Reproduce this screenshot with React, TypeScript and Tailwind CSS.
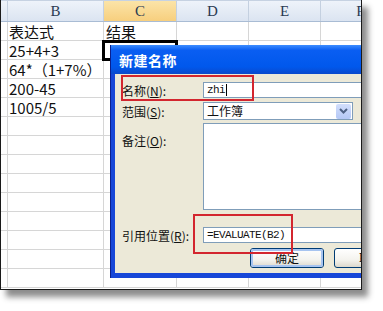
import type { ReactNode } from "react";

const cols = [
  { key: "A", w: "w-[7px]" },
  { key: "B", w: "w-[96px]" },
  { key: "C", w: "w-[73px]" },
  { key: "D", w: "w-[72px]" },
  { key: "E", w: "w-[72px]" },
  { key: "F", w: "w-[80px]" },
];

const data: Record<number, { b?: string; c?: string }> = {
  0: { b: "表达式", c: "结果" },
  1: { b: "25+4+3" },
  2: { b: "64*（1+7%）" },
  3: { b: "200-45" },
  4: { b: "1005/5" },
};

const cjk = { fontFamily: '"Noto Sans CJK SC", "Noto Sans", sans-serif' };
const mono = { fontFamily: '"Liberation Mono", "DejaVu Sans Mono", monospace' };

function Label({ children, k }: { children: ReactNode; k: string }) {
  return (
    <span className="text-[12px] leading-none text-[#111]" style={cjk}>
      {children}(<span className="underline underline-offset-1">{k}</span>):
    </span>
  );
}

function XpButton({ children, primary }: { children: ReactNode; primary?: boolean }) {
  return (
    <div className="flex h-[20px] w-[74px] shrink-0 items-center justify-center rounded-[3px] border border-[#003c74] bg-[linear-gradient(to_bottom,#ffffff,#f4f3ee_60%,#dcd8cc)]">
      <div
        className={
          "flex h-full w-full items-center justify-center rounded-[2px] text-[12px] leading-none text-[#111] " +
          (primary ? "border-2 border-[#a7c4f0]" : "")
        }
        style={cjk}
      >
        {children}
      </div>
    </div>
  );
}

export default function App() {
  return (
    <div className="h-[311px] w-[383px] overflow-hidden bg-white">
      <div className="relative h-[290px] w-[362px] overflow-hidden border-x border-b border-[#1a1a1a] bg-white shadow-[6px_7px_6px_rgba(0,0,0,0.45)]">
        {/* column header */}
        <div className="flex h-[22px] border-b border-[#a9bcd4] border-t border-t-[#c6d2e2]">
          {cols.map((c) => (
            <div
              key={c.key}
              className={
                c.w +
                " flex shrink-0 items-center justify-center border-r border-[#c4d0e0] text-[15px] text-[#2a3a52] " +
                (c.key === "C"
                  ? "bg-[linear-gradient(to_bottom,#fbe4a8,#f7cf7e)]"
                  : "bg-[linear-gradient(to_bottom,#eef3fa,#dbe4f1)]")
              }
              style={{ fontFamily: '"Liberation Serif", "DejaVu Serif", serif' }}
            >
              {c.key === "A" ? "" : c.key}
            </div>
          ))}
        </div>
        {/* rows */}
        {Array.from({ length: 14 }).map((_, r) => (
          <div key={r} className="flex h-[19px] border-b border-[#d6d6d6]">
            {cols.map((c) => (
              <div
                key={c.key}
                className={c.w + " flex shrink-0 items-center overflow-hidden whitespace-nowrap border-r border-[#d6d6d6] text-[15px] leading-none text-[#111]"}
                style={cjk}
              >
                {c.key === "B" && data[r]?.b ? <span className="pl-[1px]">{data[r].b}</span> : null}
                {c.key === "C" && data[r]?.c ? <span className="pl-[2px]">{data[r].c}</span> : null}
              </div>
            ))}
          </div>
        ))}

        {/* active cell C2 */}
        <div className="absolute left-[101px] top-[40px] h-[21px] w-[76px] border-[3px] border-black" />

        {/* dialog */}
        <div className="absolute left-[109px] top-[45px] flex h-[233px] w-[300px] flex-col border-l border-[#0a1f8e]">
          <div className="flex h-[29px] shrink-0 items-center bg-[linear-gradient(to_bottom,#3d8dff,#0a5ef2_18%,#0058ec_75%,#0a49cc)] pl-[8px]">
            <span className="text-[14px] font-bold leading-none tracking-[0.5px] text-white" style={cjk}>
              新建名称
            </span>
          </div>
          <div className="flex flex-1 flex-col border-b-[5px] border-l-[4px] border-[#1747d8] bg-[#ece9d8] pl-[7px]">
            <div className="mt-[8px] flex h-[16px] items-center">
              <div className="w-[81px] shrink-0">
                <Label k="N">名称</Label>
              </div>
              <div className="flex h-[16px] flex-1 items-center border border-[#7f9db9] bg-white pl-[3px] text-[11px] tracking-[-0.6px] text-[#111]" style={mono}>
                zhi
                <span className="ml-[1px] h-[12px] border-l border-black" />
              </div>
            </div>
            <div className="mt-[4px] flex h-[18px] items-center">
              <div className="w-[81px] shrink-0">
                <Label k="S">范围</Label>
              </div>
              <div className="flex h-[18px] w-[150px] items-center justify-between border border-[#7f9db9] bg-white pl-[3px] pr-[1px]">
                <span className="text-[12px] leading-none text-[#111]" style={cjk}>
                  工作簿
                </span>
                <div className="flex h-[15px] w-[15px] items-center justify-center rounded-[2px] bg-[linear-gradient(to_bottom,#d2defc,#b4c8f6)]">
                  <svg width="9" height="6" viewBox="0 0 9 6">
                    <path d="M1 1 L4.5 4.5 L8 1" fill="none" stroke="#4d6185" strokeWidth="2" />
                  </svg>
                </div>
              </div>
            </div>
            <div className="mt-[3px] flex h-[87px]">
              <div className="w-[81px] shrink-0 pt-[5px]">
                <Label k="O">备注</Label>
              </div>
              <div className="flex-1 border border-[#7f9db9] bg-white" />
            </div>
            <div className="mt-[17px] flex h-[16px] items-center">
              <div className="w-[81px] shrink-0">
                <Label k="R">引用位置</Label>
              </div>
              <div className="flex h-[16px] flex-1 items-center border border-[#7f9db9] bg-white pl-[3px] text-[11px] tracking-[-0.6px] text-[#111]" style={mono}>
                =EVALUATE(B2)
              </div>
            </div>
            <div className="mt-[5px] flex gap-[10px] pl-[128px]">
              <XpButton primary>确定</XpButton>
              <XpButton>取消</XpButton>
            </div>
          </div>
        </div>

        {/* red highlight boxes */}
        <div className="absolute left-[120px] top-[75px] h-[26px] w-[133px] border-2 border-[#d3262f]" />
        <div className="absolute left-[192px] top-[214px] h-[40px] w-[100px] border-2 border-[#d3262f]" />
      </div>
    </div>
  );
}
